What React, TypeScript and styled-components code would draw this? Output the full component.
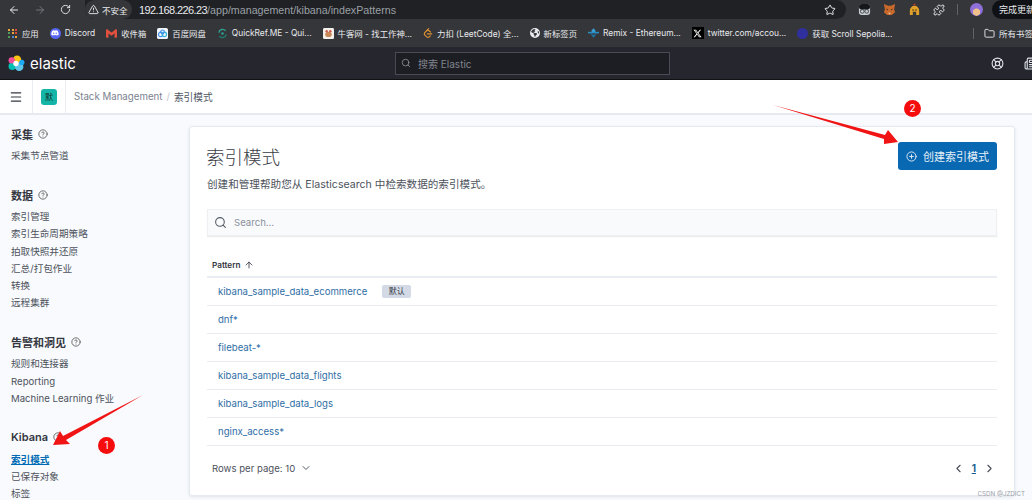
import React from 'react'
import styled, { createGlobalStyle } from 'styled-components'
import {
  ArrowLeft,
  ArrowRight,
  RotateCw,
  TriangleAlert,
  Star,
  Puzzle,
  Folder,
  ChevronsRight,
  Search,
  LifeBuoy,
  Newspaper,
  Menu,
  CircleHelp,
  CirclePlus,
  ArrowUp,
  ChevronDown,
  ChevronLeft,
  ChevronRight,
} from 'lucide-react'
import { FaDiscord } from 'react-icons/fa'
import { FaXTwitter, FaEarthAmericas } from 'react-icons/fa6'
import { SiGmail, SiLeetcode } from 'react-icons/si'

const GlobalStyle = createGlobalStyle`
  html, body {
    margin: 0;
    padding: 0;
    width: 1032px;
    height: 500px;
    overflow: hidden;
    background: #f8fafd;
    font-family: Inter, "Noto Sans CJK SC", sans-serif;
  }
  * { box-sizing: border-box; }
`

const AppsIcon = () => (
  <AppsGrid>
    {['#e8a33a', '#e8a33a', '#d9483b', '#4f9d5b', '#e8a33a', '#d9483b', '#4f9d5b', '#4a86d8', '#e8a33a'].map((c, i) => (
      <AppsDot key={i} $color={c} />
    ))}
  </AppsGrid>
)

const BaiduIcon = () => (
  <svg width="11" height="11" viewBox="0 0 12 12">
    <rect width="12" height="12" rx="2" fill="#f3f6fb" />
    <circle cx="4" cy="7" r="2.4" fill="none" stroke="#3f8fe8" strokeWidth="1.3" />
    <circle cx="8" cy="7" r="2.4" fill="none" stroke="#35b6d8" strokeWidth="1.3" />
    <circle cx="6" cy="4.2" r="2" fill="none" stroke="#3f8fe8" strokeWidth="1.2" />
  </svg>
)

const QuickRefIcon = () => (
  <svg width="11" height="11" viewBox="0 0 12 12" fill="none" strokeWidth="1.6">
    <path d="M2 5a4.2 4.2 0 0 1 7.5-1.8" stroke="#2f9e8f" />
    <path d="M10 7a4.2 4.2 0 0 1-7.5 1.8" stroke="#1f7a6d" />
    <circle cx="6" cy="6" r="1.4" fill="#2f9e8f" />
  </svg>
)

const NowcoderIcon = () => (
  <svg width="11" height="11" viewBox="0 0 12 12">
    <rect width="12" height="12" rx="1.5" fill="#f4f1ea" />
    <ellipse cx="6" cy="7" rx="3.6" ry="2.8" fill="#c98a5a" />
    <circle cx="4" cy="3.6" r="1.3" fill="#c9574a" />
    <circle cx="8" cy="3.6" r="1.3" fill="#c9574a" />
  </svg>
)

const RemixIcon = () => (
  <svg width="11" height="10" viewBox="0 0 14 12">
    <path d="M7 0l3 3.5L7 6 4 3.5z" fill="#3aa3d6" />
    <path d="M7 12L3 7l4 1.6L11 7z" fill="#1f78a8" />
    <path d="M0 4.5h14v2H0z" fill="#2b8fc4" />
  </svg>
)

const GlassesExt = () => (
  <svg width="13" height="13" viewBox="0 0 14 14">
    <rect x="1" y="1" width="12" height="12" rx="3" fill="#c8cdd2" />
    <rect x="1" y="1" width="12" height="6" rx="3" fill="#15171a" />
    <circle cx="4.6" cy="9" r="2" fill="none" stroke="#33363a" strokeWidth="0.9" />
    <circle cx="9.4" cy="9" r="2" fill="none" stroke="#33363a" strokeWidth="0.9" />
  </svg>
)

const FoxExt = () => (
  <svg width="13" height="13" viewBox="0 0 14 14">
    <path d="M1 1l4.5 2h3L13 1l-1 6 1 3-3.5 3h-5L1 10l1-3z" fill="#c9692c" />
    <path d="M3.5 6l2 1-1 1zM10.5 6l-2 1 1 1z" fill="#3a2a20" />
    <path d="M5.5 10.5h3L7 12.5z" fill="#e8c8a8" />
  </svg>
)

const HelmetExt = () => (
  <svg width="13" height="13" viewBox="0 0 14 14">
    <path d="M7 0.5c.8 0 1.2.8 1.2 2H5.8c0-1.2.4-2 1.2-2z" fill="#c0392b" />
    <path d="M2 13V8a5 5 0 0 1 10 0v5H8.8V9.4H5.2V13z" fill="#e0a02a" />
    <circle cx="5.4" cy="7.6" r=".8" fill="#3a2a10" />
    <circle cx="8.6" cy="7.6" r=".8" fill="#3a2a10" />
  </svg>
)

const groups = [
  { title: '采集', items: ['采集节点管道'] },
  { title: '数据', items: ['索引管理', '索引生命周期策略', '拍取快照并还原', '汇总/打包作业', '转换', '远程集群'] },
  { title: '告警和洞见', items: ['规则和连接器', 'Reporting', 'Machine Learning 作业'] },
  { title: 'Kibana', items: ['索引模式', '已保存对象', '标签'] },
]

const patterns = [
  'kibana_sample_data_ecommerce',
  'dnf*',
  'filebeat-*',
  'kibana_sample_data_flights',
  'kibana_sample_data_logs',
  'nginx_access*',
]

const ElasticLogo = () => (
  <svg width="17" height="17" viewBox="0 0 32 32">
    <circle cx="17" cy="9" r="8" fill="#fec514" />
    <circle cx="8" cy="21" r="7" fill="#00bfb3" />
    <circle cx="21" cy="22" r="8" fill="#5ec6e8" />
    <circle cx="7" cy="10" r="6" fill="#f04e98" />
    <circle cx="26" cy="14" r="5" fill="#1ba9f5" />
    <circle cx="15" cy="16" r="5" fill="#ffffff" />
  </svg>
)

const Arrow = ({ points, x, y, w, h }: { points: string; x: number; y: number; w: number; h: number }) => (
  <ArrowSvg width={w} height={h} viewBox={`0 0 ${w} ${h}`} $x={x} $y={y}>
    <polygon points={points} fill="#f01414" />
  </ArrowSvg>
)

const App = () => {
  const bookmarks = [
    { label: '应用', icon: <AppsIcon /> },
    { label: 'Discord', icon: <RoundIcon $color="#5865f2"><FaDiscord size={8} color="#fff" /></RoundIcon> },
    { label: '收件箱', icon: <SiGmail size={11} color="#e0503f" /> },
    { label: '百度网盘', icon: <BaiduIcon /> },
    { label: 'QuickRef.ME - Qui...', icon: <QuickRefIcon /> },
    { label: '牛客网 - 找工作神...', icon: <NowcoderIcon /> },
    { label: '力扣 (LeetCode) 全...', icon: <SiLeetcode size={10} color="#e0912f" /> },
    { label: '新标签页', icon: <FaEarthAmericas size={10} color="#e8eaed" /> },
    { label: 'Remix - Ethereum...', icon: <RemixIcon /> },
    { label: 'twitter.com/accou...', icon: <XIcon><FaXTwitter size={9} color="#fff" /></XIcon> },
    { label: '获取 Scroll Sepolia...', icon: <RoundIcon $color="#2f2f9e" /> },
  ]

  return (
    <Page>
      <GlobalStyle />
      <Toolbar>
        <NavIcons>
          <ArrowLeft size={12} color="#e8eaed" />
          <ArrowRight size={12} color="#74777c" />
          <RotateCw size={11} color="#e8eaed" />
        </NavIcons>
        <Omnibox>
          <Insecure>
            <TriangleAlert size={11} />
            不安全
          </Insecure>
          <Url>
            <UrlHost>192.168.226.23</UrlHost>
            <UrlPath>/app/management/kibana/indexPatterns</UrlPath>
          </Url>
          <StarSlot>
            <Star size={12} color="#e8eaed" />
          </StarSlot>
        </Omnibox>
        <Extensions>
          <GlassesExt />
          <FoxExt />
          <HelmetExt />
          <Puzzle size={12} color="#e8eaed" />
          <ToolbarDivider />
          <Avatar />
        </Extensions>
        <UpdatePill>完成更新</UpdatePill>
      </Toolbar>

      <BookmarkBar>
        {bookmarks.map((b) => (
          <Bookmark key={b.label}>
            {b.icon}
            {b.label}
          </Bookmark>
        ))}
        <BookmarkEnd>
          <ChevronsRight size={11} color="#e8eaed" />
          <ToolbarDivider />
          <AllBookmarks>
            <Folder size={11} />
            所有书签
          </AllBookmarks>
        </BookmarkEnd>
      </BookmarkBar>

      <ElasticHeader>
        <Brand>
          <ElasticLogo />
          <BrandName>elastic</BrandName>
        </Brand>
        <GlobalSearch>
          <Search size={10} color="#8b8f96" />
          搜索 Elastic
        </GlobalSearch>
        <HeaderIcons>
          <LifeBuoy size={13} color="#dfe3e8" />
          <Newspaper size={13} color="#dfe3e8" />
        </HeaderIcons>
      </ElasticHeader>

      <Breadcrumbs>
        <MenuCell>
          <Menu size={14} color="#343741" />
        </MenuCell>
        <SpaceCell>
          <SpaceBadge>默</SpaceBadge>
        </SpaceCell>
        <Crumb>Stack Management</Crumb>
        <CrumbSep>/</CrumbSep>
        <CrumbCurrent>索引模式</CrumbCurrent>
      </Breadcrumbs>

      <Main>
        <Sidebar>
          {groups.map((g) => (
            <NavGroup key={g.title}>
              <GroupTitle>
                {g.title}
                <CircleHelp size={10} color="#555" />
              </GroupTitle>
              {g.items.map((item) => (
                <NavItem key={item} $active={item === '索引模式'}>
                  {item}
                </NavItem>
              ))}
            </NavGroup>
          ))}
        </Sidebar>

        <Panel>
          <PanelHeader>
            <div>
              <Title>索引模式</Title>
              <Subtitle>创建和管理帮助您从 Elasticsearch 中检索数据的索引模式。</Subtitle>
            </div>
            <CreateButton>
              <CirclePlus size={11} />
              创建索引模式
            </CreateButton>
          </PanelHeader>

          <SearchBox>
            <Search size={13} color="#555c66" />
            Search...
          </SearchBox>

          <TableHead>
            Pattern
            <ArrowUp size={10} color="#343741" />
          </TableHead>
          {patterns.map((p, i) => (
            <Row key={p}>
              <PatternLink>{p}</PatternLink>
              {i === 0 && <DefaultBadge>默认</DefaultBadge>}
            </Row>
          ))}

          <Pager>
            <RowsPerPage>
              Rows per page: 10
              <ChevronDown size={12} color="#555c66" />
            </RowsPerPage>
            <PageNav>
              <ChevronLeft size={13} color="#4a4f58" />
              <PageNumber>1</PageNumber>
              <ChevronRight size={13} color="#4a4f58" />
            </PageNav>
          </Pager>
        </Panel>
      </Main>

      <Arrow x={772} y={104} w={130} h={44} points="1,1 113,31 116,26 126,38 112,40 112,35" />
      <Arrow x={50} y={393} w={96} h={56} points="93,2 16,47 20,51 3,52 10,38 13,43" />
      <NumberBadge $x={904} $y={100}>2</NumberBadge>
      <NumberBadge $x={98} $y={437}>1</NumberBadge>
      <Watermark>CSDN @JZDICT</Watermark>
    </Page>
  )
}

export default App

const Page = styled.div`
  position: relative;
  width: 1032px;
  height: 500px;
  overflow: hidden;
  display: flex;
  flex-direction: column;
  background: #f8fafd;
`

const Toolbar = styled.div`
  height: 19px;
  flex: none;
  display: flex;
  align-items: center;
  background: #35363a;
  padding-left: 8px;
`

const NavIcons = styled.div`
  display: flex;
  align-items: center;
  gap: 14px;
  width: 77px;
  flex: none;
`

const Omnibox = styled.div`
  width: 761px;
  height: 19px;
  flex: none;
  display: flex;
  align-items: center;
  background: #202124;
  border-radius: 0 10px 10px 10px;
`

const Insecure = styled.div`
  display: flex;
  align-items: center;
  gap: 3px;
  height: 19px;
  width: 47px;
  flex: none;
  padding-left: 3px;
  margin-right: 7px;
  color: #e8eaed;
  font-size: 8.5px;
  background: #35363a;
  border-radius: 10px;
  white-space: nowrap;
`

const Url = styled.div`
  font-family: "Liberation Sans", sans-serif;
  font-size: 10.7px;
  white-space: nowrap;
`

const UrlHost = styled.span`
  color: #e8eaed;
  font-size: 11px;
  letter-spacing: -0.6px;
`

const UrlPath = styled.span`
  color: #9aa0a6;
`

const StarSlot = styled.div`
  margin-left: auto;
  margin-right: 10px;
  display: flex;
`

const Extensions = styled.div`
  display: flex;
  align-items: center;
  gap: 12px;
  margin-left: 12px;
  flex: none;
`

const Avatar = styled.span`
  width: 13px;
  height: 13px;
  display: block;
  border-radius: 50%;
  background: radial-gradient(circle at 50% 70%, #f0c08a 0 30%, #8f6fd8 35%);
`

const ToolbarDivider = styled.span`
  width: 1px;
  height: 11px;
  background: #5f6368;
  flex: none;
`

const UpdatePill = styled.div`
  margin-left: 9px;
  flex: none;
  width: 60px;
  height: 19px;
  padding-left: 7px;
  background: #101114;
  color: #e8eaed;
  font-size: 9px;
  line-height: 19px;
  border-radius: 10px 0 0 10px;
  white-space: nowrap;
  overflow: hidden;
`

const BookmarkBar = styled.div`
  height: 28px;
  flex: none;
  display: flex;
  align-items: center;
  gap: 11px;
  padding-left: 8px;
  background: #35363a;
  overflow: hidden;
`

const Bookmark = styled.div`
  display: flex;
  align-items: center;
  gap: 4px;
  color: #e8eaed;
  font-size: 8.4px;
  white-space: nowrap;
  flex: none;
`

const AppsGrid = styled.span`
  display: grid;
  grid-template-columns: repeat(3, 2px);
  gap: 1.5px;
  margin-right: 1px;
`

const AppsDot = styled.i<{ $color: string }>`
  display: block;
  width: 2px;
  height: 2px;
  background: ${({ $color }) => $color};
`

const RoundIcon = styled.span<{ $color: string }>`
  width: 11px;
  height: 11px;
  display: flex;
  align-items: center;
  justify-content: center;
  border-radius: 50%;
  background: ${({ $color }) => $color};
`

const XIcon = styled.span`
  width: 12px;
  height: 12px;
  display: flex;
  align-items: center;
  justify-content: center;
  background: #000;
`

const BookmarkEnd = styled.div`
  margin-left: auto;
  display: flex;
  align-items: center;
  gap: 10px;
  flex: none;
  width: 69px;
  overflow: hidden;
`

const AllBookmarks = styled.div`
  display: flex;
  align-items: center;
  gap: 4px;
  color: #e8eaed;
  font-size: 8.5px;
  white-space: nowrap;
`

const ElasticHeader = styled.div`
  height: 33px;
  flex: none;
  display: flex;
  align-items: center;
  padding-left: 8px;
  background: #25262e;
  border-bottom: 1px solid #111;
`

const Brand = styled.div`
  display: flex;
  align-items: center;
  gap: 5px;
  width: 387px;
  flex: none;
`

const BrandName = styled.span`
  color: #fff;
  font-size: 15px;
  font-weight: 400;
`

const GlobalSearch = styled.div`
  width: 275px;
  height: 23px;
  flex: none;
  display: flex;
  align-items: center;
  gap: 7px;
  padding-left: 5px;
  color: #80848c;
  font-size: 10px;
  background: #1d1e24;
  border: 1px solid #4a4c55;
`

const HeaderIcons = styled.div`
  margin-left: 321px;
  display: flex;
  gap: 20px;
  flex: none;
`

const Breadcrumbs = styled.div`
  height: 35px;
  flex: none;
  display: flex;
  align-items: center;
  background: #fff;
  border-bottom: 2px solid #e6e9f0;
  color: #69707d;
  font-size: 9.7px;
`

const MenuCell = styled.div`
  width: 33px;
  height: 100%;
  display: flex;
  align-items: center;
  justify-content: center;
  border-right: 1px solid #e9edf3;
`

const SpaceCell = styled.div`
  width: 33px;
  height: 100%;
  display: flex;
  align-items: center;
  justify-content: center;
  border-right: 1px solid #e9edf3;
  margin-right: 8px;
`

const SpaceBadge = styled.div`
  width: 16px;
  height: 16px;
  border-radius: 3px;
  background: #14b5a6;
  color: #10312f;
  font-size: 8px;
  line-height: 16px;
  text-align: center;
`

const Crumb = styled.span`
  color: #7b8290;
`

const CrumbSep = styled.span`
  color: #c2c7d0;
  margin: 0 4px;
`

const CrumbCurrent = styled.span`
  color: #50555f;
`

const Main = styled.div`
  flex: 1;
  display: flex;
  min-height: 0;
  padding-top: 10px;
`

const Sidebar = styled.nav`
  width: 189px;
  flex: none;
  padding-left: 11px;
`

const NavGroup = styled.div`
  margin-bottom: 22px;
`

const GroupTitle = styled.div`
  display: flex;
  align-items: center;
  gap: 5px;
  height: 17px;
  margin-bottom: 5px;
  color: #343741;
  font-size: 11px;
  font-weight: 600;
`

const NavItem = styled.div<{ $active?: boolean }>`
  height: 17.2px;
  line-height: 17px;
  font-size: 9.6px;
  color: ${({ $active }) => ($active ? '#006bb4' : '#4d525c')};
  font-weight: ${({ $active }) => ($active ? 600 : 400)};
  text-decoration: ${({ $active }) => ($active ? 'underline' : 'none')};
`

const Panel = styled.section`
  width: 826px;
  height: 370px;
  flex: none;
  margin-top: 1px;
  padding: 19px 17px 0;
  background: #fff;
  border: 1px solid #e6e9f0;
  border-radius: 3px;
  box-shadow: 0 1px 3px rgba(60, 70, 90, 0.12);
`

const PanelHeader = styled.div`
  display: flex;
  justify-content: space-between;
  align-items: flex-start;
  height: 63px;
`

const Title = styled.h1`
  margin: 0 0 0 -1px;
  height: 23px;
  line-height: 22px;
  color: #3a3d46;
  font-size: 18.5px;
  font-weight: 300;
`

const Subtitle = styled.p`
  margin: 9px 0 0;
  color: #4d525c;
  font-size: 10.6px;
  line-height: 14px;
`

const CreateButton = styled.button`
  width: 99px;
  height: 28px;
  margin-top: -4px;
  flex: none;
  display: flex;
  align-items: center;
  justify-content: center;
  gap: 6px;
  padding: 0;
  border: none;
  border-radius: 3px;
  background: #0868b1;
  color: #e6f0f8;
  font-family: inherit;
  font-size: 11px;
`

const SearchBox = styled.div`
  height: 27px;
  display: flex;
  align-items: center;
  gap: 7px;
  padding-left: 6px;
  background: #f8fafc;
  border: 1px solid #eef0f4;
  box-shadow: 0 1px 1px rgba(60, 70, 90, 0.1);
  color: #8a919c;
  font-size: 9.6px;
`

const TableHead = styled.div`
  margin-top: 18px;
  height: 24px;
  display: flex;
  align-items: center;
  gap: 3px;
  padding-left: 5px;
  border-bottom: 2px solid #e9ecf1;
  color: #343741;
  font-size: 8.2px;
  font-weight: 600;
`

const Row = styled.div`
  height: 28px;
  display: flex;
  align-items: center;
  padding-left: 11px;
  border-bottom: 1px solid #e9ecf1;
`

const PatternLink = styled.span`
  color: #2f6ea5;
  font-size: 9.6px;
`

const DefaultBadge = styled.span`
  width: 29px;
  height: 13px;
  margin-left: 15px;
  text-align: center;
  line-height: 13px;
  border-radius: 2px;
  background: #d3dae6;
  color: #343741;
  font-size: 8px;
`

const Pager = styled.div`
  display: flex;
  align-items: center;
  justify-content: space-between;
  height: 44px;
  padding: 0 1px 0 5px;
`

const RowsPerPage = styled.div`
  display: flex;
  align-items: center;
  gap: 5px;
  color: #4d525c;
  font-size: 9.6px;
`

const PageNav = styled.div`
  display: flex;
  align-items: center;
  gap: 7px;
`

const PageNumber = styled.span`
  color: #1a5f92;
  font-size: 10px;
  font-weight: 700;
  text-decoration: underline;
`

const ArrowSvg = styled.svg<{ $x: number; $y: number }>`
  position: absolute;
  left: ${({ $x }) => $x}px;
  top: ${({ $y }) => $y}px;
`

const NumberBadge = styled.div<{ $x: number; $y: number }>`
  position: absolute;
  left: ${({ $x }) => $x}px;
  top: ${({ $y }) => $y}px;
  width: 17px;
  height: 17px;
  border-radius: 50%;
  background: #f50d0d;
  color: #fff;
  font-size: 10px;
  line-height: 17px;
  text-align: center;
`

const Watermark = styled.div`
  position: absolute;
  right: 7px;
  bottom: 3px;
  color: #9aa1ab;
  font-size: 6.2px;
`
